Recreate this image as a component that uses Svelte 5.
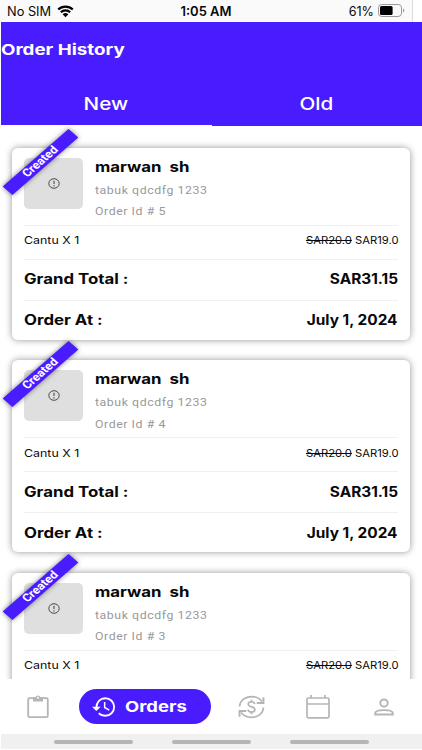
<script>
	const orders = [
		{ id: 5, name: 'marwan  sh', address: 'tabuk qdcdfg 1233' },
		{ id: 4, name: 'marwan  sh', address: 'tabuk qdcdfg 1233' },
		{ id: 3, name: 'marwan  sh', address: 'tabuk qdcdfg 1233' }
	];

	let tab = 'New';
</script>

<div class="app">
	<div class="status">
		<div class="carrier">
			<span>No SIM</span>
			<svg width="17" height="13" viewBox="0 0 17 13">
				<path d="M1.2 4.6a10.4 10.4 0 0 1 14.6 0M3.8 7.3a6.7 6.7 0 0 1 9.4 0" fill="none" stroke="#000" stroke-width="2.1" />
				<path d="M5.6 9.3a4.2 4.2 0 0 1 5.8 0L8.5 12.3z" />
			</svg>
		</div>
		<span class="time">1:05 AM</span>
		<div class="power">
			<span>61%</span>
			<svg width="27" height="13" viewBox="0 0 27 13">
				<rect x=".5" y=".5" width="23" height="12" rx="3.3" fill="none" stroke="#999" />
				<rect x="2" y="2" width="12.6" height="9" rx="1.6" />
				<path d="M25 4.5a2.2 2.2 0 0 1 0 4z" fill="#999" />
			</svg>
		</div>
	</div>

	<header>
		<h1><span class="wide title">Order History</span></h1>
		<div class="tabs">
			{#each ['New', 'Old'] as name}
				<button class:active={tab === name} on:click={() => (tab = name)}>
					<span class="wide-center">{name}</span>
				</button>
			{/each}
		</div>
	</header>

	<main>
		{#each orders as order (order.id)}
			<article class="card">
				<div class="ribbon">Created</div>
				<div class="top">
					<div class="thumb">
						<svg width="12" height="11" viewBox="0 0 12 11" fill="none" stroke="#4a4a4a">
							<ellipse cx="6" cy="5.5" rx="5.2" ry="4.8" />
							<path d="M6 2.8v3.3M6 7.2v1.2" stroke-width="1.1" />
						</svg>
					</div>
					<div class="who">
						<span class="wide name">{order.name}</span>
						<span class="wide grey">{order.address}</span>
						<span class="wide grey">Order Id # {order.id}</span>
					</div>
				</div>
				<div class="row item">
					<span class="wide product">Cantu X 1</span>
					<span class="wide-right price"><s>SAR20.0</s> SAR19.0</span>
				</div>
				<div class="row bold">
					<span class="wide label">Grand Total :</span>
					<span class="wide-right value">SAR31.15</span>
				</div>
				<div class="row bold">
					<span class="wide label">Order At :</span>
					<span class="wide-right value">July 1, 2024</span>
				</div>
			</article>
		{/each}
	</main>

	<nav>
		<button aria-label="Products">
			<svg width="22" height="24" viewBox="0 0 22 24" fill="none" stroke="#b5b5b5" stroke-width="1.8">
				<rect x="1.2" y="3.2" width="19.6" height="19" rx="1.2" />
				<path d="M6 2.2h2.5a2.6 2.2 0 0 1 5 0H16V6.4H6z" fill="#b5b5b5" stroke="none" />
				<circle cx="11" cy="2.8" r="1" fill="#fff" stroke="none" />
			</svg>
		</button>
		<button class="pill">
			<svg width="24" height="20" viewBox="0 0 26 20" preserveAspectRatio="none" fill="none" stroke="#fff" stroke-width="2">
				<path d="M4.8 10.5C4.8 5.2 8.9 1.2 14.3 1.2s9.7 3.8 9.7 8.8-4.3 8.8-9.7 8.8c-2.8 0-5.2-1-7-2.6" />
				<path d="M0 9.7h9.4L4.7 14z" fill="#fff" stroke="none" />
				<path d="M13.7 5v5.5l5 2.6" stroke-width="1.6" />
			</svg>
			<span class="wide">Orders</span>
		</button>
		<button class="payments" aria-label="Payments">
			<svg width="27" height="24" viewBox="0 0 28 24" fill="none" stroke="#b5b5b5" stroke-width="1.7">
				<path d="M1.6 11.5C1.8 5.5 7.2 1.2 14 1.2c4.6 0 8.6 1.9 10.8 5" />
				<path d="M26.4 12.5c-.2 6-5.6 10.3-12.4 10.3-4.6 0-8.6-1.9-10.8-5" />
				<path d="M26.4 2v5.8h-7M1.6 22v-5.8h7" stroke-width="2" />
				<path d="M17.4 8.9C17 7.4 15.8 6.6 14 6.6c-2 0-3.4 1-3.4 2.6 0 3.6 7 1.8 7 5.4 0 1.7-1.5 2.7-3.6 2.7s-3.5-.9-3.7-2.5M14 4.5v2.2M14 17.2v2.3" />
			</svg>
		</button>
		<button class="calendar" aria-label="Calendar">
			<svg width="24" height="24" viewBox="0 0 24 24" fill="none" stroke="#b5b5b5" stroke-width="1.7">
				<rect x="1" y="3" width="22" height="19.8" rx="1.2" />
				<path d="M1 9h22M5 0v3M19 0v3" />
			</svg>
		</button>
		<button class="profile" aria-label="Profile">
			<svg width="20" height="18" viewBox="0 0 20 18" fill="none" stroke="#b5b5b5" stroke-width="1.9">
				<ellipse cx="10" cy="5" rx="3.8" ry="3.5" />
				<path d="M1.2 16.5v-1.3c0-2.1 4.3-3.1 8.8-3.1s8.8 1 8.8 3.1v1.3z" />
			</svg>
		</button>
	</nav>

	<footer>
		<i></i><i></i><i></i>
	</footer>
</div>

<style>
	.app {
		display: flex;
		flex-direction: column;
		width: 422px;
		height: 750px;
		overflow: hidden;
		background: #fff;
		color: #080808;
		font-family: Inter, 'Liberation Sans', sans-serif;
	}

	.wide,
	.wide-right,
	.wide-center {
		display: inline-block;
		white-space: pre;
		transform: scaleX(1.12);
		transform-origin: left center;
	}

	.wide-right {
		transform-origin: right center;
	}

	.wide-center {
		transform: scaleX(1.18);
		transform-origin: center;
	}

	button {
		border: none;
		padding: 0;
		background: none;
		font-family: inherit;
		cursor: pointer;
	}

	svg {
		display: block;
		flex: none;
	}

	.status {
		flex: none;
		height: 22px;
		width: 413px;
		box-sizing: border-box;
		border-right: 1px solid #ddd;
		background: #fafafa;
		padding: 1px 7px 0;
		display: grid;
		grid-template-columns: 1fr auto 1fr;
		align-items: center;
		font-size: 12.8px;
		line-height: 21px;
	}

	.carrier,
	.power {
		display: flex;
		align-items: center;
		gap: 6px;
	}

	.power {
		justify-content: flex-end;
		gap: 4px;
		font-size: 12.6px;
	}

	.power svg {
		margin-top: -2px;
	}

	.time {
		font-size: 13px;
		font-weight: 600;
	}

	header {
		flex: none;
		height: 104px;
		margin-left: 1px;
		background: #491cff;
		color: #fff;
		display: flex;
		flex-direction: column;
	}

	h1 {
		margin: 0;
		height: 55px;
		font-size: 15px;
		line-height: 55px;
		font-weight: 700;
	}

	.title {
		transform: scaleX(1.25);
	}

	.tabs {
		flex: 1;
		display: flex;
	}

	.tabs button {
		flex: 1;
		color: #fff;
		font-size: 17.5px;
		line-height: 20px;
		font-weight: 500;
		padding-top: 6px;
		border-bottom: 1px solid transparent;
	}

	.tabs button.active {
		border-bottom-color: #fff;
	}

	main {
		flex: none;
		height: 553px;
		box-sizing: border-box;
		padding: 21.5px 12px 0;
		overflow: hidden;
		display: flex;
		flex-direction: column;
		gap: 20.5px;
	}

	.card {
		position: relative;
		flex: none;
		box-sizing: border-box;
		height: 192px;
		padding: 0 12px;
		border-radius: 6px;
		background: #fff;
		box-shadow: 0 0 7px rgba(0, 0, 0, 0.42);
	}

	.ribbon {
		position: absolute;
		left: -12px;
		top: 8px;
		width: 81px;
		height: 12px;
		background: #491cff;
		color: #fff;
		box-shadow: 0 0 5px rgba(0, 0, 0, 0.5);
		font: 700 11px/12px Roboto, sans-serif;
		text-align: center;
		transform: scaleX(1.15) rotate(-45deg);
	}

	.top {
		display: flex;
		gap: 12px;
		height: 77px;
		box-sizing: border-box;
		padding-top: 10px;
	}

	.thumb {
		width: 59px;
		height: 51px;
		border-radius: 5px;
		background: #dfdfdf;
		display: grid;
		place-items: center;
	}

	.who {
		display: flex;
		flex-direction: column;
		align-items: flex-start;
	}

	.name {
		font-size: 14px;
		font-weight: 700;
		line-height: 18px;
		margin-bottom: 4px;
		transform: scaleX(1.2);
	}

	.grey {
		color: #999;
		font: 11px/21.5px Roboto, sans-serif;
		letter-spacing: 0.5px;
	}

	.row {
		display: flex;
		justify-content: space-between;
		align-items: center;
		height: 41px;
		box-sizing: border-box;
		border-top: 1px solid #f0f0f0;
		padding-bottom: 2px;
	}

	.item {
		height: 34px;
		font-size: 10.5px;
		padding-bottom: 3px;
	}

	.product {
		transform: scaleX(1.18);
	}

	.price {
		transform: scaleX(1.07);
	}

	.bold {
		font-size: 14px;
		font-weight: 700;
	}

	.label {
		transform: scaleX(1.2);
	}

	.value {
		transform: scaleX(1.1);
	}

	nav {
		flex: none;
		height: 55px;
		box-sizing: border-box;
		display: flex;
		align-items: center;
		padding-left: 27px;
	}

	nav .pill {
		display: flex;
		align-items: center;
		gap: 9px;
		width: 132px;
		height: 35px;
		box-sizing: border-box;
		margin-left: 30px;
		padding-left: 13px;
		border-radius: 18px;
		background: #491cff;
		color: #fff;
		font-size: 15px;
		font-weight: 700;
	}

	.pill .wide {
		transform: scaleX(1.23);
	}

	.payments {
		margin-left: 27px;
	}

	.calendar {
		margin-left: 41px;
	}

	.profile {
		margin-left: 44px;
	}

	footer {
		height: 15px;
		margin-left: 1px;
		background: #f0f0f0;
		display: flex;
		gap: 39px;
		align-items: center;
		padding-left: 53px;
	}

	footer i {
		width: 79px;
		height: 4px;
		border-radius: 2px;
		background: #b5b5b5;
	}
</style>
